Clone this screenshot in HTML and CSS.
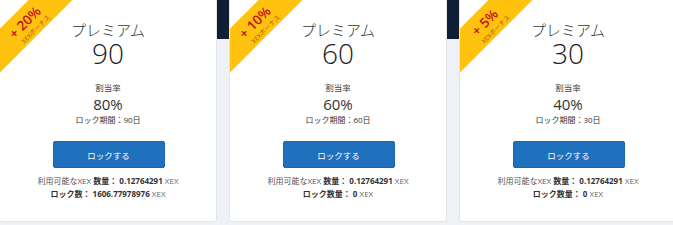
FILE: index.html
```html
<!DOCTYPE html>
<html lang="ja">
<head>
<meta charset="utf-8">
<link rel="stylesheet" href="styles.css">
</head>
<body>
<div class="cards">
  <div class="card">
    <div class="ribbon"><div class="bonus">+ 20%</div><div class="bonus-sub">XEXボーナス</div></div>
    <div class="title">プレミアム</div>
    <div class="days">90</div>
    <div class="label">割当率</div>
    <div class="rate">80%</div>
    <div class="period">ロック期間：90日</div>
    <button class="lock-btn">ロックする</button>
    <div class="info">利用可能なXEX <b>数量：</b> <b class="num">0.12764291</b> <span class="unit">XEX</span></div>
    <div class="info"><b>ロック数：</b> <b class="num">1606.77978976</b> <span class="unit">XEX</span></div>
  </div>
  <div class="card">
    <div class="ribbon"><div class="bonus">+ 10%</div><div class="bonus-sub">XEXボーナス</div></div>
    <div class="title">プレミアム</div>
    <div class="days">60</div>
    <div class="label">割当率</div>
    <div class="rate">60%</div>
    <div class="period">ロック期間：60日</div>
    <button class="lock-btn">ロックする</button>
    <div class="info">利用可能なXEX <b>数量：</b> <b class="num">0.12764291</b> <span class="unit">XEX</span></div>
    <div class="info"><b>ロック数量：</b> <b class="num">0</b> <span class="unit">XEX</span></div>
  </div>
  <div class="card">
    <div class="ribbon"><div class="bonus">+ 5%</div><div class="bonus-sub">XEXボーナス</div></div>
    <div class="title">プレミアム</div>
    <div class="days">30</div>
    <div class="label">割当率</div>
    <div class="rate">40%</div>
    <div class="period">ロック期間：30日</div>
    <button class="lock-btn">ロックする</button>
    <div class="info">利用可能なXEX <b>数量：</b> <b class="num">0.12764291</b> <span class="unit">XEX</span></div>
    <div class="info"><b>ロック数量：</b> <b class="num">0</b> <span class="unit">XEX</span></div>
  </div>
</div>
</body>
</html>
```
FILE: styles.css
```css
html, body {
  margin: 0;
  padding: 0;
}
body {
  width: 673px;
  height: 225px;
  overflow: hidden;
  background: linear-gradient(#0f2036 0, #0f2036 39px, #eef1f5 39px, #eef1f5 100%);
  font-family: "Open Sans", "Noto Sans CJK JP", sans-serif;
  color: #333;
}
.cards {
  display: flex;
  gap: 12px;
  margin-left: -1px;
  width: max-content;
}
.card {
  position: relative;
  overflow: hidden;
  box-sizing: border-box;
  width: 218px;
  height: 222px;
  background: #fff;
  border: 1px solid #e1e5ea;
  border-top: 0;
  border-radius: 0 0 3px 3px;
  padding-top: 21px;
  display: flex;
  flex-direction: column;
  align-items: center;
  text-align: center;
}
.ribbon {
  position: absolute;
  left: -45px;
  top: 9.5px;
  width: 140px;
  height: 31px;
  box-sizing: border-box;
  padding-top: 6px;
  background: #ffc20e;
  transform: rotate(-45deg);
  text-align: center;
}
.bonus {
  font-size: 13.5px;
  line-height: 15px;
  color: #c3101c;
  font-weight: 600;
  padding-left: 4px;
}
.bonus-sub {
  font-size: 6.5px;
  line-height: 9px;
  color: #a55a12;
  padding-left: 10px;
}
.title {
  font-size: 15px;
  line-height: 18px;
  font-weight: 300;
  color: #333;
}
.days {
  font-size: 28px;
  line-height: 28px;
  font-weight: 300;
  color: #222;
}
.label {
  margin-top: 15px;
  font-size: 8.5px;
  line-height: 12px;
  color: #444;
}
.rate {
  margin-top: 1px;
  font-size: 15px;
  line-height: 18px;
  color: #333;
}
.period {
  margin-top: 1px;
  font-size: 8px;
  line-height: 12px;
  color: #333;
}
.lock-btn {
  margin-top: 15px;
  width: 112px;
  height: 27px;
  margin-left: 1px;
  background: #1f71bd;
  border: 1px solid #1b66ab;
  border-radius: 2px;
  color: #fff;
  font-family: "Open Sans", "Noto Sans CJK JP", sans-serif;
  font-size: 8.5px;
  padding: 0;
  margin-bottom: 6px;
}
.info {
  font-size: 8px;
  line-height: 13px;
  color: #555;
  white-space: nowrap;
}
.info b {
  font-weight: 700;
  color: #333;
}
.info .unit {
  color: #666;
}
```
